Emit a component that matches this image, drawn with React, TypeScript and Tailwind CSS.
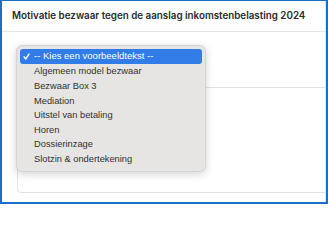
import React from 'react';

const options = [
    'Algemeen model bezwaar',
    'Bezwaar Box 3',
    'Mediation',
    'Uitstel van betaling',
    'Horen',
    'Dossierinzage',
    'Slotzin & ondertekening',
];

const App: React.FC = () => {
    return (
        <div className="w-[328px] h-[204px] overflow-hidden bg-white border-[#1a6fc6] border-t border-l-2 border-r-2 border-b-2 font-['Inter',sans-serif]">
            <div className="h-full border-r border-[#e6e6e6] flex flex-col">
                <div className="h-[31px] border-b border-[#e4e4e4] flex items-center pl-[10px]">
                    <h2 className="text-[9.8px] font-semibold text-[#2a2a2a] whitespace-nowrap">
                        Motivatie bezwaar tegen de aanslag inkomstenbelasting 2024
                    </h2>
                </div>
                <div className="relative flex-1 pl-[15px] pt-[55px] pb-[9px]">
                    <div className="h-full border border-[#e2e2e2] rounded-sm -mr-[4px]" />
                    {/* open native select list */}
                    <div className="absolute left-[14px] top-[13px] w-[190px] rounded-[6px] bg-[#e7e5e3] shadow-[0_2px_8px_rgba(0,0,0,0.18)] border border-[#d6d4d2] px-[3px] pt-[3px] pb-[5px] font-['Liberation_Sans',sans-serif]">
                        <div className="h-[15px] rounded-[3px] bg-[#317ce6] text-white text-[9.5px] flex items-center pl-[3px]">
                            <svg className="w-[7px] h-[7px] mr-[4px]" viewBox="0 0 10 10" fill="none" stroke="white" strokeWidth="2" strokeLinecap="round" strokeLinejoin="round">
                                <path d="M1.5 5.5 L4 8.5 L8.5 1.5" />
                            </svg>
                            <span>-- Kies een voorbeeldtekst --</span>
                        </div>
                        {options.map((o) => (
                            <div key={o} className="h-[14.6px] text-[9.3px] text-[#303030] flex items-center pl-[14px] pt-[2px]">
                                {o}
                            </div>
                        ))}
                    </div>
                </div>
            </div>
        </div>
    );
};

export default App;
